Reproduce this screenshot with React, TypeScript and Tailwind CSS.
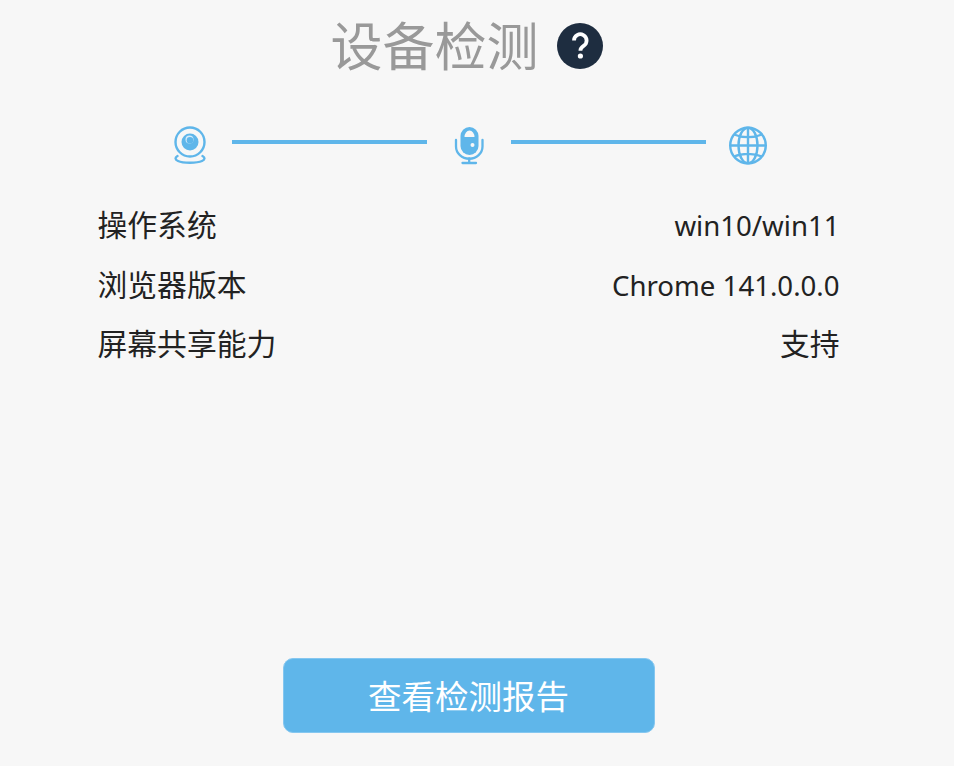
const font = { fontFamily: '"Noto Sans", "Noto Sans CJK SC", sans-serif' };

function CameraIcon() {
  return (
    <svg width="34" height="40" viewBox="0 0 34 40" fill="none">
      <circle cx="17" cy="17" r="14.500" stroke="#5fb6ea" strokeWidth="2.400" />
      <circle cx="17" cy="17" r="8.500" fill="#5fb6ea" />
      <circle cx="16.500" cy="14.500" r="4" fill="#d5ecfa" />
      <circle cx="17" cy="15.300" r="3.300" fill="#5fb6ea" />
      <path d="M4.500 31C1.800 32.500 1.800 34.500 5 36c5 2.300 19 2.300 24 0 3.200-1.500 3.200-3.500.5-5" stroke="#5fb6ea" strokeWidth="2.400" strokeLinecap="round" />
    </svg>
  );
}

function MicIcon() {
  return (
    <svg width="30" height="40" viewBox="0 0 30 40" fill="none">
      <path d="M6.500 11a9 9 0 0 1 18 0v10a9 9 0 0 1-18 0z" fill="#5fb6ea" />
      <path d="M10.500 12a5 6.500 0 0 1 10 0z" fill="#f7f7f7" />
      <circle cx="18.500" cy="20" r="2" fill="#f7f7f7" />
      <path d="M2 15v6.500a13 12 0 0 0 26.500 0V15" stroke="#5fb6ea" strokeWidth="2.300" strokeLinecap="round" />
      <path d="M15.200 33.500V38M8.500 38h13.500" stroke="#5fb6ea" strokeWidth="2.300" strokeLinecap="round" />
    </svg>
  );
}

function GlobeIcon() {
  return (
    <svg width="40" height="40" viewBox="0 0 40 40" fill="none" stroke="#5fb6ea" strokeWidth="2.400">
      <circle cx="20" cy="20.500" r="17.800" />
      <ellipse cx="20" cy="20.500" rx="9.500" ry="17.800" />
      <path d="M20 2.700v35.600M2.200 20.500h35.600M6 9.500c8 3.500 20 3.500 28 0M6 31.500c8-3.500 20-3.500 28 0" />
    </svg>
  );
}

function HelpIcon() {
  return (
    <svg width="46" height="46" viewBox="0 0 46 46" fill="none">
      <circle cx="23" cy="23" r="23" fill="#1e2d40" />
      <path d="M17 17.500a6.300 6.300 0 1 1 9.600 5.400c-2 1.300-3.200 2.300-3.200 4.800" stroke="#fff" strokeWidth="3.800" />
      <circle cx="23.400" cy="33" r="2.600" fill="#fff" />
    </svg>
  );
}

function Row({ label, value, latin }: { label: string; value: string; latin?: boolean }) {
  return (
    <div className="flex h-[59.500px] items-center justify-between text-[29.800px] text-[#222]">
      <span>{label}</span>
      <span className={latin ? 'text-[27.600px]' : ''}>{value}</span>
    </div>
  );
}

export default function App() {
  return (
    <div className="h-[766px] w-[954px] overflow-hidden bg-[#f7f7f7]" style={font}>
      <div className="flex w-[937px] flex-col items-center">
        <div className="mt-[6px] flex h-[80px] items-center gap-[18px] pr-[4px]">
          <h1 className="text-[52px] font-normal text-[#999]">设备检测</h1>
          <HelpIcon />
        </div>

        <div className="mt-[39px] ml-[3px] flex items-center gap-[25px]">
          <CameraIcon />
          <div className="mb-[6px] h-[4px] w-[195px] bg-[#5fb6ea]" />
          <div className="mx-[2px]">
            <MicIcon />
          </div>
          <div className="mb-[6px] h-[4px] w-[195px] bg-[#5fb6ea]" />
          <div className="-ml-[3px]">
            <GlobeIcon />
          </div>
        </div>

        <div className="mt-[31px] w-[742px]">
          <Row label="操作系统" value="win10/win11" latin />
          <Row label="浏览器版本" value="Chrome 141.0.0.0" latin />
          <Row label="屏幕共享能力" value="支持" />
        </div>

        <button className="mt-[283px] h-[75px] w-[372px] rounded-[10px] border border-[#85c7f0] bg-[#5fb6ea] pt-[3px] text-[33.500px] text-white">查看检测报告</button>
      </div>
    </div>
  );
}
